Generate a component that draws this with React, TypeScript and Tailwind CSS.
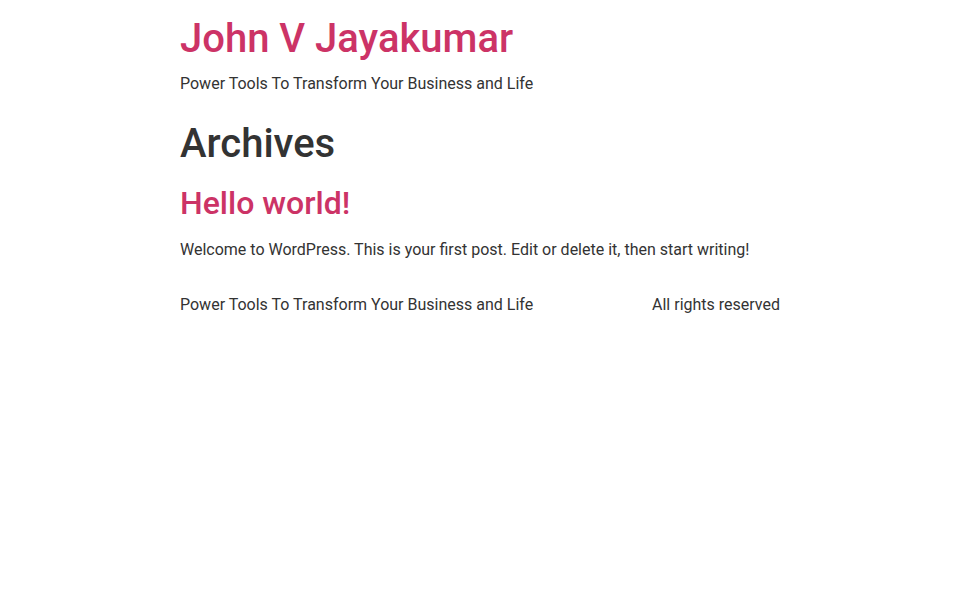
export default function App() {
  return (
    <div
      className="min-h-screen bg-white text-[#333333]"
      style={{ fontFamily: "Roboto, 'Liberation Sans', sans-serif" }}
    >
      <div className="mx-auto w-[600px]">
        <header className="pt-[15px]">
          <h1 className="text-[40px] font-medium leading-[48px] text-[#cc3366]">
            <a href="#">John V Jayakumar</a>
          </h1>
          <p className="mt-[9px] text-base leading-6">
            Power Tools To Transform Your Business and Life
          </p>
        </header>

        <main className="mt-[24px]">
          <h1 className="text-[40px] font-medium leading-[48px]">Archives</h1>
          <article className="mt-[16px]">
            <h2 className="text-[32px] font-medium leading-[38px] text-[#cc3366]">
              <a href="#">Hello world!</a>
            </h2>
            <p className="mt-[16px] text-base leading-6">
              Welcome to WordPress. This is your first post. Edit or delete it, then start writing!
            </p>
          </article>
        </main>

        <footer className="mt-[31px] flex justify-between text-base leading-6">
          <p>Power Tools To Transform Your Business and Life</p>
          <p>All rights reserved</p>
        </footer>
      </div>
    </div>
  );
}
